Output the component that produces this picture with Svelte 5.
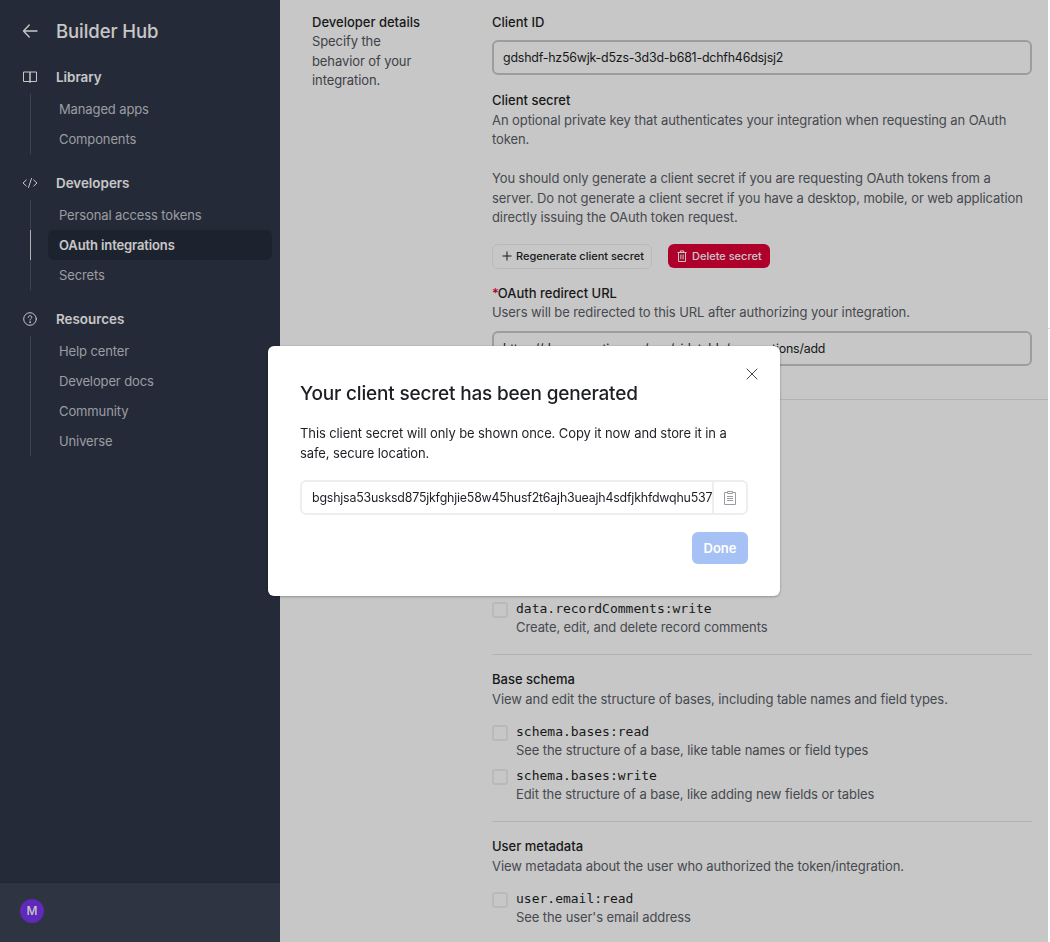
<script>
  const nav = [
    { title: 'Library', icon: 'book', items: ['Managed apps', 'Components'] },
    { title: 'Developers', icon: 'code', items: ['Personal access tokens', 'OAuth integrations', 'Secrets'] },
    { title: 'Resources', icon: 'help', items: ['Help center', 'Developer docs', 'Community', 'Universe'] }
  ];
  const active = 'OAuth integrations';
  const scopeGroups = [
    {
      title: 'Record comments',
      desc: 'View and edit record comments.',
      scopes: [
        ['data.records:read', 'See the data in records'],
        ['data.records:write', 'Create, edit, and delete records'],
        ['data.recordComments:read', 'See comments in records'],
        ['data.recordComments:write', 'Create, edit, and delete record comments']
      ]
    },
    {
      title: 'Base schema',
      desc: 'View and edit the structure of bases, including table names and field types.',
      scopes: [
        ['schema.bases:read', 'See the structure of a base, like table names or field types'],
        ['schema.bases:write', 'Edit the structure of a base, like adding new fields or tables']
      ]
    },
    {
      title: 'User metadata',
      desc: 'View metadata about the user who authorized the token/integration.',
      scopes: [['user.email:read', "See the user's email address"]]
    }
  ];
</script>

<div class="layout">
  <aside class="sidebar">
    <div class="sidebar-scroll">
      <div class="brand">
        <svg class="back" width="18" height="18" viewBox="0 0 18 18" fill="none" stroke="currentColor" stroke-width="1.4" stroke-linecap="round" stroke-linejoin="round"><path d="M16 9H2.500M8.200 3 2.500 9l5.700 6"/></svg>
        <span>Builder Hub</span>
      </div>
      {#each nav as group}
        <section class="group">
          <div class="group-title">
            <span class="group-icon">
              {#if group.icon === 'book'}
                <svg width="16" height="16" viewBox="0 0 16 16" fill="none" stroke="currentColor" stroke-width="1" stroke-linejoin="round"><path d="M1.500 3h13v9.500h-13zM8 3v11" /><path d="M7.500 3v9.500h1V3z" fill="currentColor" stroke="none"/></svg>
              {:else if group.icon === 'code'}
                <svg width="16" height="16" viewBox="0 0 16 16" fill="none" stroke="currentColor" stroke-width="1" stroke-linecap="round" stroke-linejoin="round"><path d="M4.300 5 1 8l3.300 3M11.700 5 15 8l-3.300 3M9.500 3.500l-3 9"/></svg>
              {:else}
                <svg width="16" height="16" viewBox="0 0 16 16" fill="none" stroke="currentColor" stroke-width="1" stroke-linecap="round"><circle cx="8" cy="8" r="6.300"/><path d="M6.200 6.400c0-1 .8-1.700 1.800-1.700s1.800.7 1.800 1.600c0 1.300-1.800 1.400-1.800 2.800"/><circle cx="8" cy="11.100" r=".35" fill="currentColor"/></svg>
              {/if}
            </span>
            <span>{group.title}</span>
          </div>
          <ul class="items">
            {#each group.items as item}
              <li class:active={item === active}>{item}</li>
            {/each}
          </ul>
        </section>
      {/each}
    </div>
    <footer class="sidebar-foot"><span class="avatar">M</span></footer>
  </aside>

  <main class="main">
    <div class="details">
      <div class="side-label">
        <h3>Developer details</h3>
        <p>Specify the behavior of your integration.</p>
      </div>
      <div class="form">
        <label class="label" for="cid">Client ID</label>
        <input id="cid" class="field" readonly value="gdshdf-hz56wjk-d5zs-3d3d-b681-dchfh46dsjsj2" />

        <h4 class="label secret-title">Client secret</h4>
        <p class="desc">An optional private key that authenticates your integration when requesting an OAuth token.</p>
        <p class="desc para">You should only generate a client secret if you are requesting OAuth tokens from a server. Do not generate a client secret if you have a desktop, mobile, or web application directly issuing the OAuth token request.</p>
        <div class="actions">
          <button class="btn-outline">
            <svg width="10" height="10" viewBox="0 0 10 10" fill="none" stroke="currentColor" stroke-width="1"><path d="M5 .5v9M.5 5h9"/></svg>
            <span>Regenerate client secret</span>
          </button>
          <button class="btn-danger">
            <svg width="10" height="12" viewBox="0 0 10 12" fill="none" stroke="currentColor" stroke-width="1" stroke-linejoin="round"><path d="M.5 2.500h9M3.300 2.500V.9h3.400v1.600M1.500 2.500v9h7v-9M3.900 4.500v4.800M6.100 4.500v4.800"/></svg>
            <span>Delete secret</span>
          </button>
        </div>
        <h4 class="label redirect-title"><span class="req">*</span>OAuth redirect URL</h4>
        <p class="desc">Users will be redirected to this URL after authorizing your integration.</p>
        <input class="field url" readonly value="https://demo.mystic.com/app/sidetable/connections/add" />
      </div>
    </div>

    <hr class="wide-rule" />

    <div class="scopes">
      {#each scopeGroups as group, i}
        {#if i > 0}<hr class="rule" />{/if}
        <section class="scope-group">
          <h4 class="label">{group.title}</h4>
          <p class="desc">{group.desc}</p>
          <div class="scope-list">
            {#each group.scopes as [name, text]}
              <div class="scope">
                <span class="check"></span>
                <div>
                  <code>{name}</code>
                  <p class="desc">{text}</p>
                </div>
              </div>
            {/each}
          </div>
        </section>
      {/each}
    </div>
  </main>
</div>

<div class="overlay"></div>
<span class="edge-tick"></span>

<div class="modal" role="dialog" aria-modal="true">
  <button class="close" aria-label="Close">
    <svg width="12" height="12" viewBox="0 0 12 12" fill="none" stroke="currentColor" stroke-width="1"><path d="m.7.700 10.600 10.600M11.300.7.700 11.300"/></svg>
  </button>
  <h2>Your client secret has been generated</h2>
  <p>This client secret will only be shown once. Copy it now and store it in a safe, secure location.</p>
  <div class="secret">
    <span class="secret-value">bgshjsa53usksd875jkfghjie58w45husf2t6ajh3ueajh4sdfjkhfdwqhu537</span>
    <span class="copy">
      <svg width="12" height="14" viewBox="0 0 12 14" fill="none" stroke="currentColor" stroke-width="1"><path d="M3.500 1.500H.5v12h11v-12h-3M3.500.5h5v2h-5zM3 5.500h6M3 7.500h6M3 9.500h6"/></svg>
    </span>
  </div>
  <div class="modal-actions"><button class="done">Done</button></div>
</div>

<style>
  :global(body) {
    margin: 0;
    background: #fff;
    font-family: Inter, "Liberation Sans", sans-serif;
    font-size: 13px;
    color: #1d1f25;
  }
  * { box-sizing: border-box; }
  h2, h3, h4, p, ul { margin: 0; padding: 0; }
  button { font-family: inherit; cursor: pointer; }

  .layout {
    display: grid;
    grid-template-columns: 280px 768px;
    width: 1048px;
    height: 942px;
    overflow: hidden;
    background: #fff;
  }

  .sidebar {
    background: #2f3648;
    display: flex;
    flex-direction: column;
    color: #fff;
  }
  .sidebar-scroll { flex: 1; padding: 20px 8px 0 20px; }
  .brand {
    display: flex;
    align-items: center;
    gap: 17px;
    height: 22px;
    font-size: 18.500px;
    font-weight: 500;
    letter-spacing: -0.08px;
    margin-bottom: 24px;
    color: #fff;
  }
  .back { color: #fff; flex: none; margin-left: 1px; }
  .group { margin-bottom: 18px; }
  .group-title {
    display: flex;
    align-items: center;
    gap: 16px;
    height: 22px;
    font-size: 13.400px;
    font-weight: 600;
    color: #fff;
  }
  .group-icon { display: flex; width: 20px; justify-content: center; color: #fff; }
  .group-icon svg { display: block; }
  .items {
    list-style: none;
    margin: 6px 0 0 10px;
    border-left: 1px solid #4f5668;
  }
  .items li {
    height: 30px;
    line-height: 30px;
    margin-left: 17px;
    padding-left: 11px;
    color: #c5c8cf;
    font-size: 13px;
    letter-spacing: -0.12px;
    border-radius: 6px;
    position: relative;
  }
  .items li.active {
    background: #262c3d;
    color: #fff;
    font-weight: 600;
  }
  .items li.active::before {
    content: "";
    position: absolute;
    left: -18px;
    top: 0;
    bottom: 0;
    width: 1px;
    background: #e4e5e8;
  }
  .sidebar-foot {
    height: 60px;
    background: #3b4355;
    border-top: 1px solid #2b3242;
    display: flex;
    align-items: center;
    padding: 0 0 4px 20px;
  }
  .avatar {
    width: 24px;
    height: 24px;
    border-radius: 50%;
    background: #7a35f0;
    color: #fff;
    font-size: 12px;
    font-weight: 500;
    display: flex;
    align-items: center;
    justify-content: center;
  }

  .main { padding: 13px 0 0 32px; min-width: 0; overflow: hidden; }
  .details { display: grid; grid-template-columns: 180px 539.500px; }
  .side-label h3 { font-size: 13px; font-weight: 500; line-height: 19px; color: #1d1f25; }
  .side-label p { font-size: 13px; line-height: 19.500px; letter-spacing: -0.1px; color: #50545c; width: 120px; }
  .label { display: block; font-size: 13px; font-weight: 500; line-height: 19.500px; color: #1d1f25; }
  .desc { font-size: 13px; line-height: 19.500px; letter-spacing: -0.085px; color: #5a5e66; }
  .field {
    display: block;
    width: 100%;
    height: 35px;
    margin-top: 7.500px;
    border: 2px solid #c9c9c9;
    border-radius: 6px;
    background: #fff;
    padding: 0 9px;
    font: 400 12.400px Inter, "Liberation Sans", sans-serif;
    letter-spacing: -0.2px;
    color: #1d1f25;
    outline: none;
  }
  .secret-title { margin-top: 16px; }
  .para { margin-top: 19.500px; }
  .actions { display: flex; align-items: center; gap: 16px; margin-top: 16px; }
  .btn-outline, .btn-danger {
    display: inline-flex;
    align-items: center;
    gap: 4px;
    border-radius: 6px;
    font-size: 11px;
    font-weight: 500;
    white-space: nowrap;
    padding: 0 0 0 9px;
  }
  .btn-outline { background: transparent; border: 1px solid #efefef; color: #1d1f25; height: 25px; width: 160px; }
  .btn-danger { background: #df0037; border: 0; color: #fff; height: 24px; width: 102px; gap: 5px; }
  .redirect-title { margin-top: 15px; }
  .req { color: #df0037; margin-right: -1px; }
  .url { margin-top: 8.500px; }

  .wide-rule { border: 0; border-top: 1px solid #e6e6e6; margin: 32.500px 0 0 -32px; }
  .scopes { margin: 0 0 0 180px; width: 539.500px; padding-top: 16.500px; }
  .rule { border: 0; border-top: 1px solid #e6e6e6; margin: 16.500px 0 15.500px; }
  .scope-list { margin-top: 14px; display: flex; flex-direction: column; gap: 6px; }
  .scope { display: flex; gap: 8px; }
  .check {
    width: 16px;
    height: 16px;
    margin-top: 2px;
    border: 2px solid #eeeeee;
    border-radius: 3px;
    background: #fff;
    flex: none;
  }
  code {
    display: block;
    font: 400 13px/18px "DejaVu Sans Mono", monospace;
    color: #1d1f25;
  }

  .overlay { position: fixed; inset: 0 2px 0 0; background: rgba(0, 0, 0, 0.22); }
  .edge-tick { position: fixed; right: 0; top: 328px; width: 2px; height: 1px; background: #dcdcdc; }
  .modal {
    position: fixed;
    left: 268px;
    top: 346px;
    width: 512px;
    height: 250px;
    background: #fff;
    border-radius: 6px;
    padding: 35px 32px 0;
    box-shadow: 0 0 1px rgba(0, 0, 0, .35), 0 1px 3px rgba(0, 0, 0, .25);
  }
  .close {
    position: absolute;
    top: 22px;
    right: 22px;
    width: 12px;
    height: 12px;
    padding: 0;
    border: 0;
    background: none;
    color: #41454d;
    display: flex;
  }
  .modal h2 { font-size: 19px; font-weight: 500; line-height: 26px; letter-spacing: -0.18px; color: #1d1f25; }
  .modal p { margin-top: 16px; font-size: 13px; line-height: 20px; letter-spacing: -0.1px; color: #1d1f25; }
  .secret {
    display: flex;
    margin-top: 17px;
    height: 35px;
    border: 2px solid #eeeeee;
    border-radius: 6px;
    align-items: stretch;
  }
  .secret-value {
    flex: 1;
    min-width: 0;
    padding: 0 0 0 10px;
    line-height: 31px;
    font-size: 12.400px;
    letter-spacing: -0.2px;
    white-space: nowrap;
    overflow: hidden;
    color: #1d1f25;
  }
  .copy {
    width: 34px;
    flex: none;
    border-left: 2px solid #eeeeee;
    display: flex;
    align-items: center;
    justify-content: center;
    color: #999ca3;
  }
  .modal-actions { display: flex; justify-content: flex-end; margin-top: 17px; }
  .done {
    width: 56px;
    height: 32px;
    border: 0;
    border-radius: 6px;
    background: #a6c1f3;
    color: #fff;
    font-size: 13px;
    font-weight: 600;
  }
</style>
